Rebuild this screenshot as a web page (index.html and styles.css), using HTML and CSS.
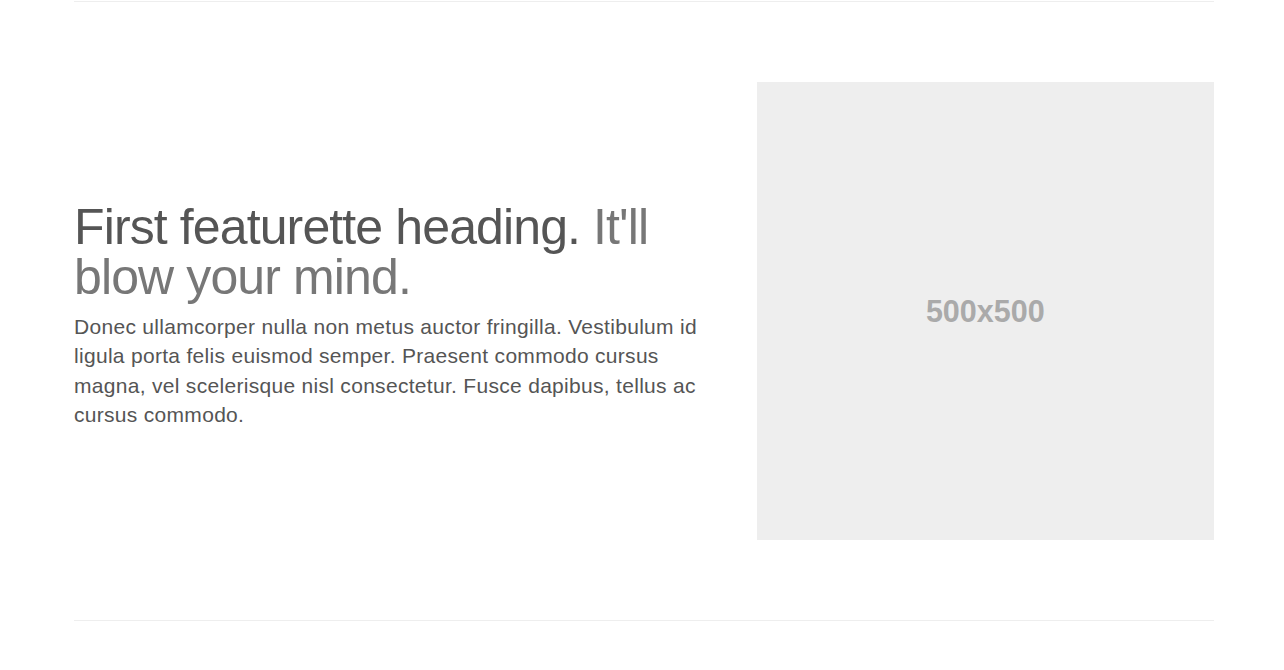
FILE: index.html
```html
<!DOCTYPE html>
<html>
<head>
<meta charset="utf-8">
<link rel="stylesheet" href="styles.css">
</head>
<body>
<div class="container">
  <hr class="divider">
  <div class="featurette">
    <div class="text-col">
      <h2 class="heading">First featurette heading. <span class="muted">It'll blow your mind.</span></h2>
      <p class="lead">Donec ullamcorper nulla non metus auctor fringilla. Vestibulum id ligula porta felis euismod semper. Praesent commodo cursus magna, vel scelerisque nisl consectetur. Fusce dapibus, tellus ac cursus commodo.</p>
    </div>
    <div class="img-col">
      <div class="placeholder"><span>500x500</span></div>
    </div>
  </div>
  <hr class="divider">
</div>
</body>
</html>
```

FILE: styles.css
```css
html, body {
  margin: 0;
  padding: 0;
  background: #fff;
}
body {
  font-family: "Liberation Sans", Arial, sans-serif;
  color: #333;
  padding-top: 1px;
}
.container {
  width: 1140px;
  margin-left: 74px;
}
.divider {
  height: 0;
  border: 0;
  border-top: 1px solid #eee;
  margin: 0 0 80px;
}
.featurette + .divider {
  margin: 80px 0 0;
}
.featurette {
  display: flex;
  gap: 30px;
}
.text-col {
  width: 652.5px;
  flex: none;
}
.img-col {
  width: 457.5px;
  flex: none;
}
.heading {
  margin: 120px 0 10px;
  font-size: 50px;
  font-weight: 400;
  line-height: 1;
  letter-spacing: -0.88px;
  color: #555;
}
.muted {
  color: #777;
}
.lead {
  margin: 0;
  font-size: 21px;
  line-height: 1.4;
  letter-spacing: 0.3px;
  color: #555;
}
.placeholder {
  width: 457.5px;
  height: 457.5px;
  background: #eee;
  display: flex;
  align-items: center;
  justify-content: center;
}
.placeholder span {
  font-weight: 700;
  font-size: 30.5px;
  color: #aaa;
  padding-top: 2px;
}
```
